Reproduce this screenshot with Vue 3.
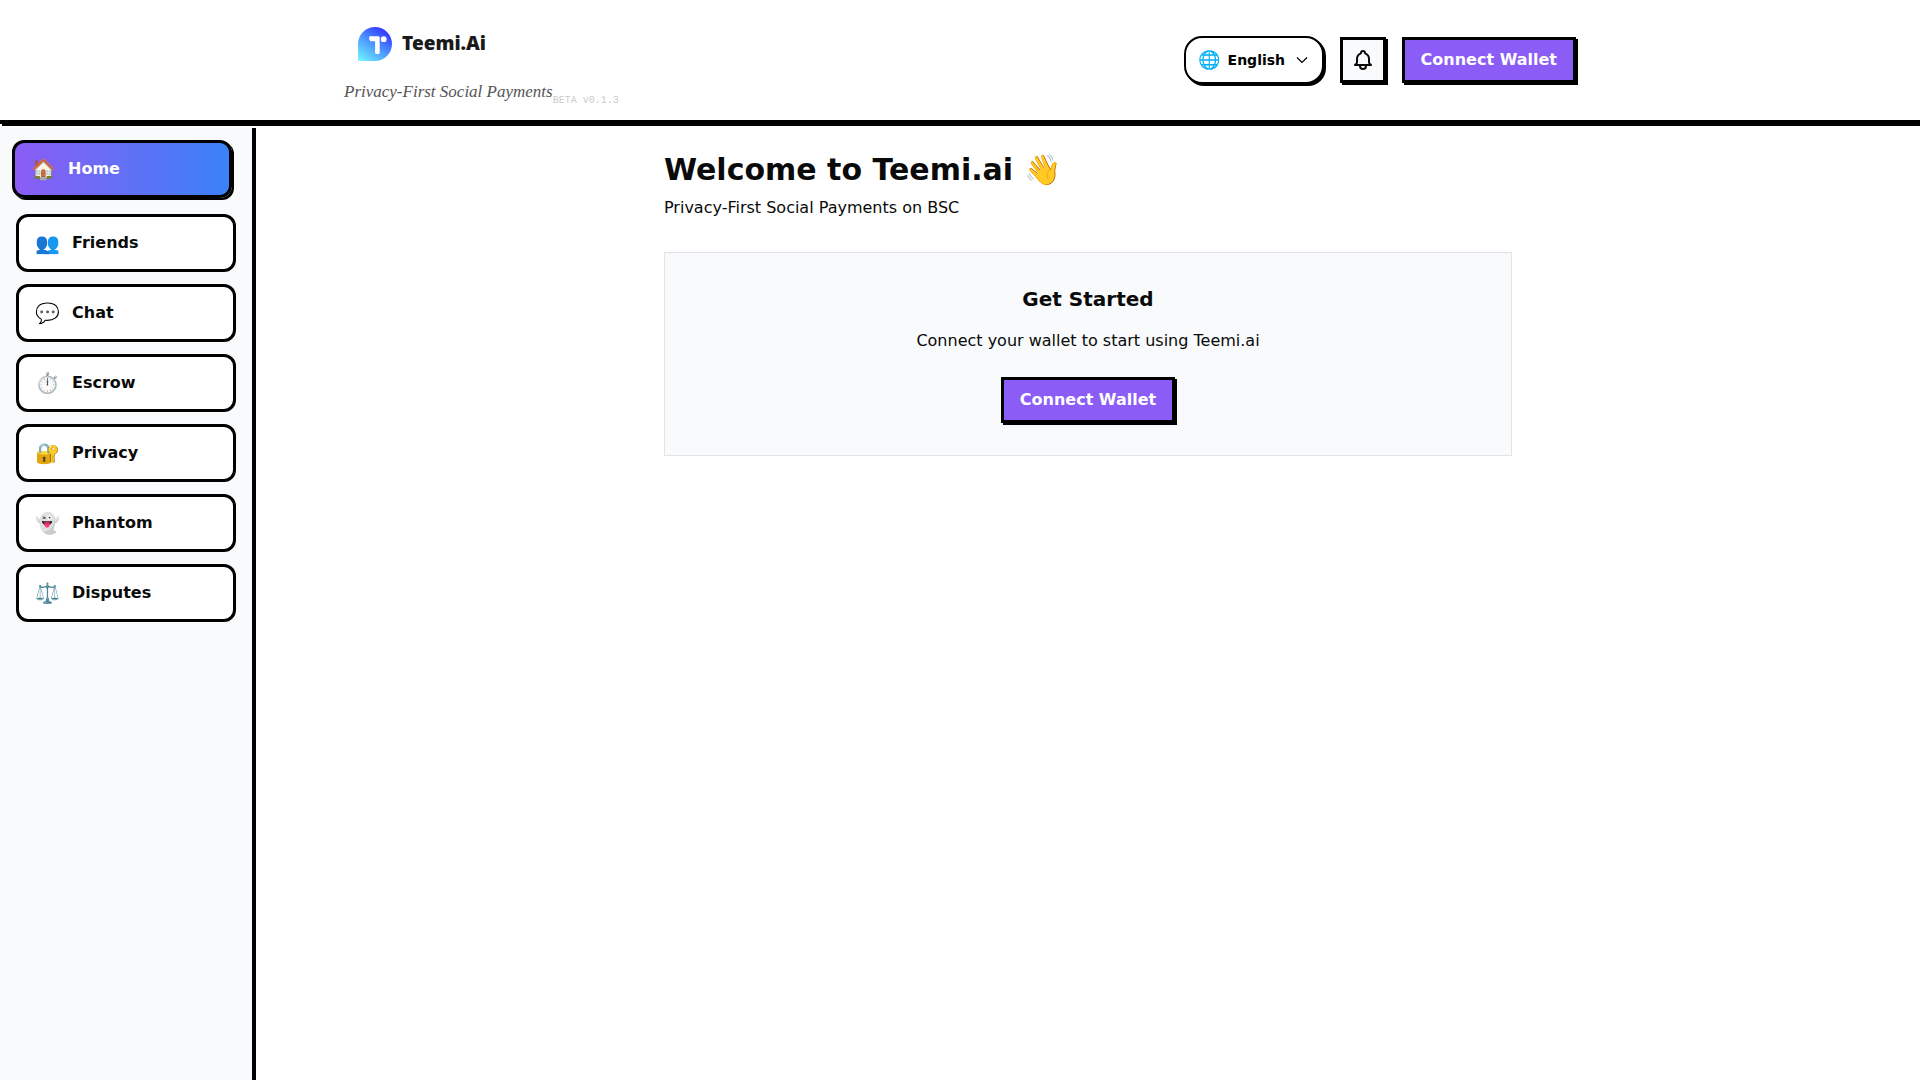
<template>
	<div class="layout">
		<header class="header">
			<div class="header-inner">
				<div class="brand">
					<a class="logo" href="#" aria-label="Teemi.Ai">
						<svg class="logo-mark" viewBox="0 0 34 34" aria-hidden="true">
							<defs>
								<linearGradient id="mark" x1="0.08" y1="1" x2="0.72" y2="0.1">
									<stop offset="0" stop-color="#70f2ff" />
									<stop offset="0.5" stop-color="#4fa0ff" />
									<stop offset="1" stop-color="#3540ff" />
								</linearGradient>
							</defs>
							<path
								d="M0 17a17 17 0 1 1 17 17H1.5A1.5 1.5 0 0 1 0 32.5z"
								fill="url(#mark)"
							/>
							<path
								d="M12 9.2h8.4q1.3 0 1.3 1.3v15.3q0 1.2-1.2 1.2h-2.2q-1.2 0-1.2-1.2V14.2H14q-2.8 0-2.8-2.8v-1.4q0-.8.8-.8z"
								fill="#fff"
							/>
							<circle cx="25.7" cy="12.2" r="2.9" fill="#fff" />
						</svg>
						<span class="logo-text">Teemi.Ai</span>
					</a>
					<div class="tagline-row">
						<span class="tagline">Privacy-First Social Payments</span>
						<span class="version">BETA v0.1.3</span>
					</div>
				</div>

				<div class="actions">
					<label class="language">
						<span class="globe">🌐</span>
						<select v-model="language" class="language-select" aria-label="Language">
							<option value="en">English</option>
						</select>
						<svg class="chevron" viewBox="0 0 16 16" aria-hidden="true">
							<path d="M3 5.5l5 5 5-5" />
						</svg>
					</label>
					<button class="bell" type="button" aria-label="Notifications">
						<svg viewBox="0 0 24 24" aria-hidden="true">
							<path
								d="M15 17h5l-1.405-1.405A2.032 2.032 0 0118 14.158V11a6.002 6.002 0 00-4-5.659V5a2 2 0 10-4 0v.341C7.67 6.165 6 8.388 6 11v3.159c0 .538-.214 1.055-.595 1.436L4 17h5m6 0v1a3 3 0 11-6 0v-1m6 0H9"
							/>
						</svg>
					</button>
					<button class="wallet" type="button">Connect Wallet</button>
				</div>
			</div>
		</header>

		<div class="body">
			<nav class="sidebar">
				<a
					v-for="item in items"
					:key="item.name"
					href="#"
					class="nav-item"
					:class="{ active: item.name === current }"
					@click.prevent="current = item.name"
				>
					<span class="nav-icon">{{ item.icon }}</span>
					<span>{{ item.name }}</span>
				</a>
			</nav>

			<main class="main">
				<div class="content">
					<h1 class="title">Welcome to Teemi.ai 👋</h1>
					<p class="subtitle">Privacy-First Social Payments on BSC</p>
					<section class="card">
						<h2 class="card-title">Get Started</h2>
						<p class="card-text">Connect your wallet to start using Teemi.ai</p>
						<button class="wallet" type="button">Connect Wallet</button>
					</section>
				</div>
			</main>
		</div>
	</div>
</template>

<script setup>
import { ref } from 'vue'

const language = ref('en')
const current = ref('Home')

const items = [
	{ name: 'Home', icon: '🏠' },
	{ name: 'Friends', icon: '👥' },
	{ name: 'Chat', icon: '💬' },
	{ name: 'Escrow', icon: '⏱️' },
	{ name: 'Privacy', icon: '🔐' },
	{ name: 'Phantom', icon: '👻' },
	{ name: 'Disputes', icon: '⚖️' }
]
</script>

<style>
body {
	margin: 0;
	background: #fff;
}
</style>

<style scoped>
.layout {
	display: flex;
	flex-direction: column;
	gap: 4px;
	min-height: 100vh;
	font-family: 'DejaVu Sans', sans-serif;
	font-size: 16px;
	line-height: 24px;
	color: #0a0a0a;
}

.layout * {
	box-sizing: border-box;
}

.header {
	border-bottom: 4px solid #000;
	box-shadow: 2px 2px 0 #000;
	background: #fff;
}

.header-inner {
	display: flex;
	align-items: center;
	justify-content: space-between;
	max-width: 1280px;
	margin: 0 auto;
	padding: 16px 24px;
}

.brand {
	display: flex;
	flex-direction: column;
	gap: 8px;
}

.logo {
	display: flex;
	align-items: center;
	gap: 10px;
	height: 56px;
	padding-left: 14px;
	text-decoration: none;
	color: #1a1a1a;
}

.logo-mark {
	width: 34px;
	height: 34px;
}

.logo-text {
	padding-bottom: 2px;
	font-family: 'Noto Sans', sans-serif;
	font-size: 19px;
	font-weight: 900;
}

.tagline-row {
	display: flex;
	align-items: flex-end;
}

.tagline {
	font-family: 'Liberation Serif', serif;
	font-size: 17px;
	font-style: italic;
	color: #555;
}

.version {
	font-family: 'Liberation Mono', monospace;
	font-size: 10px;
	line-height: 6px;
	color: #ccc;
}

.actions {
	display: flex;
	align-items: center;
	gap: 16px;
}

.language {
	display: flex;
	align-items: center;
	gap: 8px;
	height: 48px;
	padding: 0 12px;
	border: 2px solid #000;
	border-radius: 18px;
	background: #fff;
	box-shadow: 2px 2px 0 #000;
}

.globe {
	font-size: 18px;
}

.language-select {
	appearance: none;
	padding: 0;
	border: none;
	background: none;
	font-family: inherit;
	font-size: 14px;
	font-weight: 600;
	color: #000;
}

.chevron {
	width: 16px;
	height: 16px;
	fill: none;
	stroke: #000;
	stroke-width: 1.2;
}

.bell {
	display: flex;
	align-items: center;
	justify-content: center;
	width: 46px;
	height: 46px;
	padding: 0;
	border: 3px solid #000;
	background: #f9fafc;
	box-shadow: 2px 2px 0 #000;
}

.bell svg {
	width: 24px;
	height: 24px;
	fill: none;
	stroke: #0a0a0a;
	stroke-width: 2;
	stroke-linecap: round;
	stroke-linejoin: round;
}

.wallet {
	padding: 8px 16px;
	border: 3px solid #000;
	background: #8b5cf6;
	box-shadow: 2px 2px 0 #000;
	font-family: inherit;
	font-size: 16px;
	font-weight: 700;
	line-height: 24px;
	color: #fff;
	cursor: pointer;
}

.body {
	display: flex;
	flex: 1;
}

.sidebar {
	display: flex;
	flex-direction: column;
	gap: 12px;
	width: 256px;
	flex-shrink: 0;
	padding: 16px;
	border-right: 4px solid #000;
	background: #f9fafc;
}

.nav-item {
	display: flex;
	align-items: center;
	gap: 12px;
	padding: 12px 16px;
	border: 3px solid #000;
	border-radius: 12px;
	background: #fff;
	font-weight: 600;
	line-height: 28px;
	color: #0a0a0a;
	text-decoration: none;
}

.nav-item.active {
	background: linear-gradient(to right, #8b5cf6, #3b82f6);
	box-shadow: 2px 2px 0 #000;
	color: #fff;
	transform: translate(-4px, -4px);
}

.nav-icon {
	font-size: 20px;
}

.main {
	flex: 1;
}

.content {
	max-width: 896px;
	margin: 0 auto;
	padding: 24px;
}

.title {
	margin: 0 0 8px;
	font-size: 30px;
	font-weight: 700;
	line-height: 36px;
}

.subtitle {
	margin: 0 0 32px;
}

.card {
	padding: 32px;
	border: 1px solid #e2e4e9;
	background: #f9fafc;
	text-align: center;
}

.card-title {
	margin: 0 0 16px;
	font-size: 20px;
	font-weight: 700;
	line-height: 28px;
}

.card-text {
	margin: 0 0 24px;
}
</style>
